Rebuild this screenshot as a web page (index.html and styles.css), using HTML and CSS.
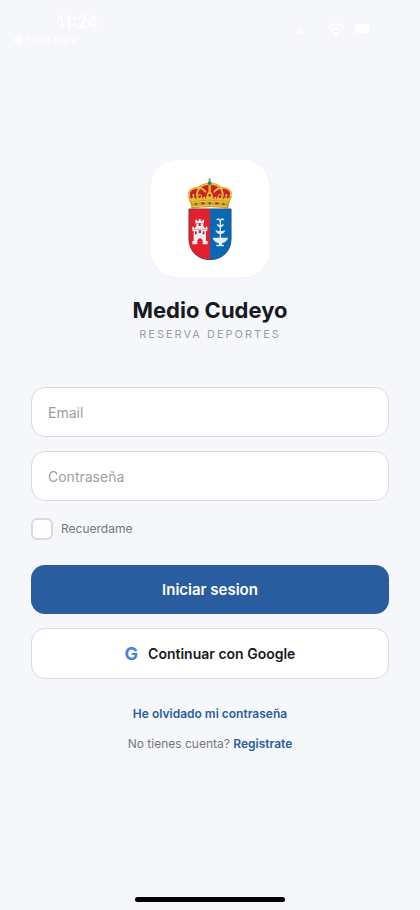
FILE: index.html
```html
<!DOCTYPE html>
<html lang="es">
<head>
  <meta charset="UTF-8">
  <title>Medio Cudeyo – Reserva Deportes</title>
  <meta name="viewport" content="width=device-width, initial-scale=1.0">
  <link rel="stylesheet" href="styles.css">
</head>
<body>
  <header class="status">
    <div class="status-left">
      <div class="time">11:24</div>
      <div class="back">◀ TestFlight</div>
    </div>
    <svg class="status-icons" viewBox="0 0 90 24" aria-hidden="true">
      <path d="M7 10l3 7-3-2-3 2z"/>
      <path class="arc" d="M36 9q8-6 16 0M39 13q5-4 10 0"/>
      <path d="M41 15q3-2 6 0l-3 3z"/>
      <rect x="63" y="6" width="14" height="9" rx="2"/>
    </svg>
  </header>

  <main class="login">
    <div class="logo">
      <svg class="crest" viewBox="138 80 144 252" role="img" aria-label="Escudo de Medio Cudeyo">
        <!-- corona -->
        <path fill="#c9202c" d="M150 154C138 128 150 111 174 112C184 101 198 98 209 99C222 98 237 102 246 112C270 111 280 128 268 154Z"/>
        <g fill="none" stroke="#e2a91c" stroke-width="6" stroke-linecap="round">
          <path d="M153 151C139 133 148 116 166 113C179 111 190 116 196 124"/>
          <path d="M266 151C281 133 272 116 254 113C241 111 230 116 223 124"/>
          <path d="M174 147C164 120 184 101 207 101"/>
          <path d="M245 147C256 120 236 101 212 101"/>
          <path d="M209 102V148" stroke-width="8"/>
        </g>
        <g fill="none" stroke="#fff0b0" stroke-width="2" stroke-dasharray="1 5" stroke-linecap="round">
          <path d="M150 148C139 133 148 116 166 113C179 111 190 116 196 124"/>
          <path d="M269 148C281 133 272 116 254 113C241 111 230 116 223 124"/>
          <path d="M173 143C164 120 184 101 207 101"/>
          <path d="M246 143C256 120 236 101 212 101"/>
        </g>
        <path fill="#edbd25" stroke="#a97618" d="M147 136L155 145L160 137L168 147L175 132L183 132L189 145L197 145L202 128L209 122L216 128L221 145L230 145L236 132L244 132L250 147L258 137L263 145L272 136L264 173Q209 164 155 173Z"/>
        <path fill="#d7a020" stroke="#8d6616" d="M154 154Q209 145 265 154L263 173Q209 164 156 173Z"/>
        <path fill="none" stroke="#ffe078" stroke-width="2" d="M156 156Q209 148 263 156M158 169Q209 161 261 169"/>
        <g fill="#b91f29">
          <circle cx="179" cy="139" r="4"/><circle cx="209" cy="135" r="4"/><circle cx="240" cy="139" r="4"/>
          <rect x="184" y="156" width="9" height="6"/><rect x="226" y="156" width="9" height="6"/>
        </g>
        <g fill="#207844">
          <path d="M163 161l5-4 5 4-5 4zM204 159l5-4 5 4-5 4zM246 161l5-4 5 4-5 4z"/>
        </g>
        <g fill="#f5df9a">
          <circle cx="147" cy="135" r="3"/><circle cx="160" cy="135" r="3"/><circle cx="193" cy="142" r="3"/>
          <circle cx="226" cy="142" r="3"/><circle cx="259" cy="135" r="3"/><circle cx="272" cy="135" r="3"/>
        </g>
        <circle cx="209" cy="98" r="6" fill="#24886a"/>
        <path fill="none" stroke="#8f9850" stroke-width="3" d="M209 83V95M205 88H213"/>
        <!-- escudo -->
        <path fill="#e3202e" d="M146 175H210V329C174 329 146 303 146 266Z"/>
        <path fill="#0868b4" d="M210 175H274V266C274 303 246 329 210 329Z"/>
        <path fill="none" stroke="#574055" stroke-width="2" d="M147 176H273V266C273 303 245 328 210 328C175 328 147 303 147 266Z"/>
        <!-- castillo -->
        <path fill="#ececee" d="M157 282V272H161V242H157V229H162V233H166V229H169V219H166V208H171V212H176V206H182V212H187V208H192V219H190V229H193V233H197V229H202V242H198V272H203V282H188V270Q180 258 172 270V282Z"/>
        <g fill="#b72635">
          <rect x="176" y="218" width="6" height="9"/>
          <rect x="165" y="243" width="5" height="9"/>
          <rect x="188" y="243" width="5" height="9"/>
          <rect x="176" y="240" width="7" height="8"/>
        </g>
        <path fill="none" stroke="#a1676e" stroke-width="1.5" d="M159 237H200M168 219H191"/>
        <!-- fuente -->
        <g fill="none" stroke="#e6edf3" stroke-width="4" stroke-linecap="round">
          <path d="M241 209V284M241 215Q239 202 231 208M241 215Q243 202 251 208"/>
        </g>
        <path fill="#e6edf3" d="M230 220Q241 228 252 220Q250 230 241 230Q232 230 230 220ZM226 239Q241 247 256 239Q253 251 241 251Q229 251 226 239ZM218 262H264Q261 275 246 278V283H252V288H229V283H236V278Q221 275 218 262Z"/>
      </svg>
    </div>
    <h1>Medio Cudeyo</h1>
    <p class="subtitle">RESERVA DEPORTES</p>

    <form class="form">
      <input class="field" type="email" placeholder="Email" aria-label="Email">
      <input class="field" type="password" placeholder="Contraseña" aria-label="Contraseña">
      <label class="remember"><input type="checkbox"> Recuerdame</label>
      <button class="btn primary" type="submit">Iniciar sesion</button>
      <button class="btn google" type="button"><span class="g">G</span> Continuar con Google</button>
    </form>

    <a class="link forgot" href="#">He olvidado mi contraseña</a>
    <p class="signup">No tienes cuenta? <a class="link" href="#">Registrate</a></p>
  </main>

  <footer class="home"><div class="home-bar"></div></footer>
</body>
</html>
```

FILE: styles.css
```css
:root {
  --bg:#f5f7fb;
  --primary:#2a5d9f;
  --text:#171a21;
  --muted:#74777e;
  --placeholder:#9b9ea5;
  --border:#d8dae1;
}
* {box-sizing:border-box;}
body {
  margin:0;
  min-height:100vh;
  display:flex; flex-direction:column;
  font-family:Inter,"Liberation Sans",sans-serif;
  background:var(--bg);
  color:var(--text);
}
h1, p {margin:0;}

.status {
  height:51px;
  padding:12px 38px 0 12px;
  display:flex; justify-content:space-between;
  color:#fff;
}
.time {
  padding-left:45px;
  font-size:17px; line-height:20px; font-weight:600;
}
.back {font-size:11px; line-height:16px; font-weight:500;}
.status-icons {
  width:90px; height:24px;
  margin-top:6px;
  fill:#fff;
}
.status-icons .arc {fill:none; stroke:#fff; stroke-width:2;}

.login {
  flex:1;
  display:flex; flex-direction:column; align-items:center; justify-content:center;
  padding:0 31px;
}
.logo {
  width:118px; height:117px;
  display:flex; align-items:center; justify-content:center;
  border-radius:26px;
  background:#fff;
  box-shadow:0 2px 10px rgba(30,50,90,0.02);
}
.crest {width:48px; height:84px;}
h1 {
  margin-top:19px;
  font-size:22px; line-height:28px; font-weight:700;
}
.subtitle {
  margin-top:3px;
  font-size:11px; line-height:14px;
  letter-spacing:2px;
  color:var(--placeholder);
}

.form {
  width:100%;
  margin-top:46px;
  display:flex; flex-direction:column; gap:14px;
}
.field {
  width:100%; height:50px;
  padding:0 16px;
  border:1px solid var(--border);
  border-radius:14px;
  background:#fff;
  font-family:inherit; font-size:14px;
  color:var(--text);
}
.field::placeholder {color:var(--placeholder); opacity:1;}
.remember {
  align-self:flex-start;
  display:flex; align-items:center; gap:8px;
  margin:3px 0 11px;
  font-size:12px; line-height:22px;
  color:var(--muted);
}
.remember input {
  appearance:none;
  width:22px; height:22px;
  margin:0;
  border:2px solid var(--border);
  border-radius:6px;
  background:#fff;
}
.remember input:checked {background:var(--primary);}
.btn {
  height:49px;
  display:flex; align-items:center; justify-content:center; gap:10px;
  border:none; border-radius:14px;
  font-family:inherit; font-size:14px; font-weight:600;
  cursor:pointer;
}
.primary {background:var(--primary); color:#fff; font-size:15px;}
.google {
  height:51px;
  border:1px solid var(--border);
  background:#fff;
  color:var(--text);
}
.g {font-size:18px; font-weight:700; color:#4583e5;}

.link {color:var(--primary); font-weight:600; text-decoration:none;}
.forgot {
  margin-top:26px;
  font-size:12px; line-height:18px;
}
.signup {
  margin-top:12px;
  font-size:12px; line-height:18px;
  color:var(--muted);
}

.home {
  height:48px;
  display:flex; align-items:flex-end; justify-content:center;
  padding-bottom:8px;
}
.home-bar {
  width:150px; height:5px;
  border-radius:3px;
  background:#000;
}
```
